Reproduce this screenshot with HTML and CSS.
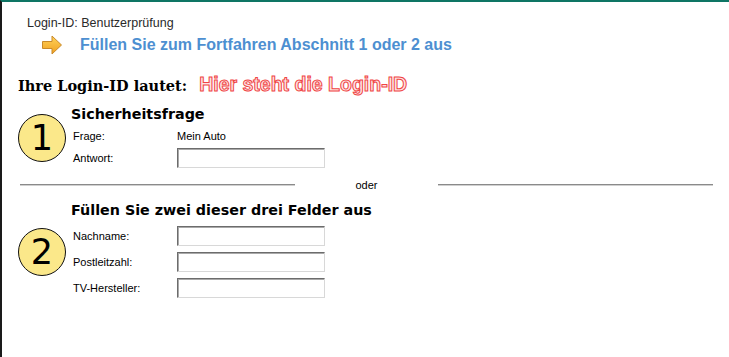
FILE: index.html
```html
<!DOCTYPE html>
<html>
  <head>
    <meta charset="UTF-8" />
    <title>Login-ID: Benutzerprüfung</title>
    <link rel="stylesheet" href="styles.css">
  </head>
  <body>
    <div class="page">
      <div class="crumb">Login-ID: Benutzerprüfung</div>
      <div class="hint">
        <svg class="arrow" width="22" height="22" viewBox="0 0 22 22">
          <defs>
            <linearGradient id="ag" x1="0" y1="0" x2="0" y2="1">
              <stop offset="0" stop-color="#ffd35a" />
              <stop offset="1" stop-color="#f0a020" />
            </linearGradient>
          </defs>
          <path d="M1.5 7.5 H11 V2 L20.5 11 L11 20 V14.5 H1.5 Z" fill="url(#ag)" stroke="#c98a2a" stroke-width="1" stroke-linejoin="round" />
        </svg>
        <span>Füllen Sie zum Fortfahren Abschnitt 1 oder 2 aus</span>
      </div>

      <div class="login">
        <span class="login-label">Ihre Login-ID lautet:</span>
        <span class="login-value">Hier steht die Login-ID</span>
      </div>

      <div class="section one">
        <div class="num">1</div>
        <div class="fields">
          <h2>Sicherheitsfrage</h2>
          <div class="row">
            <label>Frage:</label>
            <span class="answer">Mein Auto</span>
          </div>
          <div class="row">
            <label for="antwort">Antwort:</label>
            <input type="text" id="antwort" />
          </div>
        </div>
      </div>

      <div class="divider">
        <span class="line"></span>
        <span class="oder">oder</span>
        <span class="line"></span>
      </div>

      <div class="section two">
        <div class="num">2</div>
        <div class="fields">
          <h2>Füllen Sie zwei dieser drei Felder aus</h2>
          <div class="row">
            <label for="nachname">Nachname:</label>
            <input type="text" id="nachname" />
          </div>
          <div class="row">
            <label for="plz">Postleitzahl:</label>
            <input type="text" id="plz" />
          </div>
          <div class="row">
            <label for="tv">TV-Hersteller:</label>
            <input type="text" id="tv" />
          </div>
        </div>
      </div>
    </div>
  </body>
</html>
```

FILE: styles.css
```css
body {
  margin: 0;
  font-family: "Liberation Sans", Arial, sans-serif;
  background: #fff;
}
.page {
  height: 355px;
  border-top: 2px solid #0e7564;
  border-left: 2px solid #1a1a1a;
}
.crumb {
  margin: 14px 0 0 25px;
  font-size: 12.5px;
  line-height: 14px;
  color: #2a2a2a;
}
.hint {
  display: flex;
  align-items: center;
  margin: 4px 0 0 39px;
  height: 22px;
}
.arrow {
  margin-right: 17px;
}
.hint span {
  font-size: 16px;
  font-weight: bold;
  color: #4d8fd1;
}
.login {
  display: flex;
  align-items: baseline;
  margin: 17px 0 0 16px;
}
.login-label {
  font-family: "DejaVu Serif", Georgia, serif;
  font-weight: bold;
  font-size: 14.5px;
  color: #000;
  margin-right: 12px;
}
.login-value {
  font-size: 19.5px;
  font-weight: bold;
  color: #fde4e4;
  -webkit-text-stroke: 1px #f04545;
}
.section {
  display: flex;
  align-items: center;
}
.num {
  width: 46px;
  height: 46px;
  margin: 0 5px 0 16px;
  border: 1.5px solid #111;
  border-radius: 50%;
  background: #fbe88a;
  font-family: "DejaVu Sans", Verdana, sans-serif;
  font-size: 35px;
  line-height: 46px;
  text-align: center;
  color: #000;
}
.fields h2 {
  margin: 0 0 2px 0;
  font-family: "DejaVu Sans", Verdana, sans-serif;
  font-size: 14.3px;
  line-height: 17px;
  color: #000;
}
.row {
  display: flex;
  align-items: center;
  height: 22px;
  font-size: 11px;
  color: #000;
}
.row label {
  width: 104px;
  padding-left: 2px;
}
.row input {
  width: 142px;
  height: 18px;
  padding: 0 2px;
  margin: 0;
  border: 1px solid;
  border-color: #6c6c6c #d8d8d8 #d8d8d8 #6c6c6c;
  box-shadow: inset 1px 1px 0 #a9a9a9;
  font-size: 11px;
}
.section.one {
  margin-top: 10px;
}
.section.two {
  margin-top: 10px;
}
.section.two h2 {
  margin-bottom: 4px;
}
.section.two .row {
  height: 26px;
}
.divider {
  display: flex;
  align-items: center;
  margin: 9px 0 0 18px;
  height: 14px;
}
.divider .line {
  width: 275px;
  height: 0;
  border-top: 1px solid #8a8a8a;
  border-bottom: 1px solid #d0d0d0;
}
.oder {
  width: 143px;
  text-align: center;
  font-size: 11px;
  color: #000;
}
```
